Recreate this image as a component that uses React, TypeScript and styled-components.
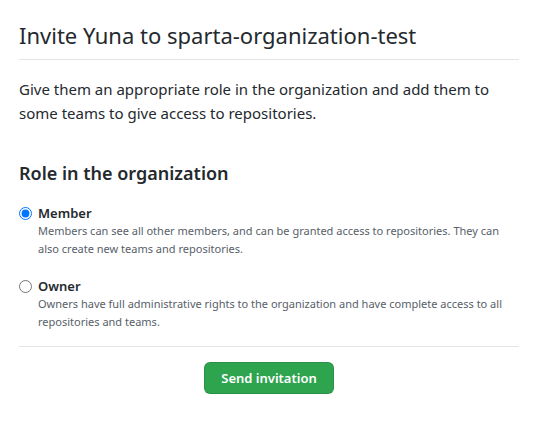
import styled, { createGlobalStyle } from 'styled-components'

const GlobalStyle = createGlobalStyle`
  body {
    margin: 0;
    background: #fff;
    font-family: "Noto Sans", "Open Sans", sans-serif;
    color: #24292e;
  }
`

const roles = [
  {
    id: 'member',
    label: 'Member',
    note: 'Members can see all other members, and can be granted access to repositories. They can also create new teams and repositories.',
    checked: true,
  },
  {
    id: 'owner',
    label: 'Owner',
    note: 'Owners have full administrative rights to the organization and have complete access to all repositories and teams.',
    checked: false,
  },
]

function App() {
  return (
    <>
      <GlobalStyle />
      <Page>
        <Subhead>
          <Title>Invite Yuna to sparta-organization-test</Title>
        </Subhead>
        <Lead>
          Give them an appropriate role in the organization and add them to some teams to give access to
          repositories.
        </Lead>
        <SectionTitle>Role in the organization</SectionTitle>
        <RoleList>
          {roles.map(role => (
            <RoleItem key={role.id}>
              <Radio type="radio" name="role" defaultChecked={role.checked} id={role.id} />
              <RoleText>
                <RoleLabel htmlFor={role.id}>{role.label}</RoleLabel>
                <RoleNote>{role.note}</RoleNote>
              </RoleText>
            </RoleItem>
          ))}
        </RoleList>
        <Footer>
          <SendButton type="button">Send invitation</SendButton>
        </Footer>
      </Page>
    </>
  )
}

export default App

const Page = styled.div`
  padding: 20px 18px 0 19px;
`

const Subhead = styled.div`
  border-bottom: 1px solid #e1e4e8;
  padding-bottom: 9px;
`

const Title = styled.h1`
  margin: 0;
  font-size: 22px;
  font-weight: 400;
  line-height: 30px;
`

const Lead = styled.p`
  margin: 17px 0 0;
  font-size: 15px;
  line-height: 24px;
  max-width: 492px;
`

const SectionTitle = styled.h2`
  margin: 36px 0 0;
  font-size: 18px;
  font-weight: 600;
  line-height: 24px;
`

const RoleList = styled.div`
  display: flex;
  flex-direction: column;
  gap: 19px;
  margin-top: 19px;
`

const RoleItem = styled.div`
  display: flex;
  align-items: flex-start;
  gap: 6px;
`

const Radio = styled.input`
  margin: 3px 0 0 0;
  width: 13px;
  height: 13px;
  flex: none;
`

const RoleText = styled.div`
  display: flex;
  flex-direction: column;
`

const RoleLabel = styled.label`
  font-size: 13px;
  font-weight: 600;
  line-height: 18px;
`

const RoleNote = styled.p`
  margin: 0;
  font-size: 11px;
  line-height: 18px;
  color: #586069;
  max-width: 474px;
`

const Footer = styled.div`
  display: flex;
  justify-content: center;
  border-top: 1px solid #e1e4e8;
  margin-top: 15px;
  padding-top: 15px;
`

const SendButton = styled.button`
  width: 130px;
  height: 32px;
  border: 1px solid rgba(27, 31, 35, 0.15);
  border-radius: 6px;
  background: #2ea44f;
  color: #fff;
  font-family: inherit;
  font-size: 13px;
  font-weight: 600;
  cursor: pointer;
`
